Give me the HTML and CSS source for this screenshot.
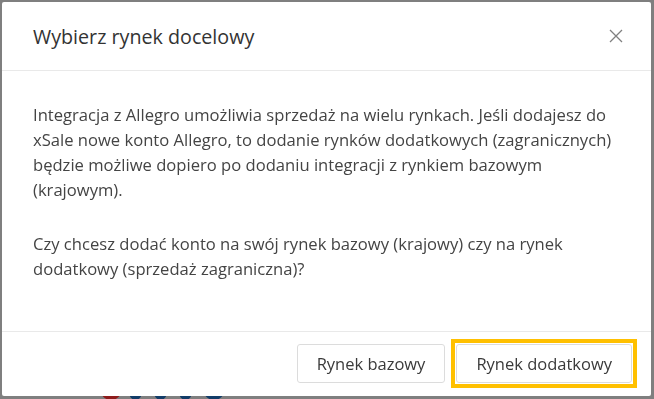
FILE: index.html
```html
<!DOCTYPE html>
<html lang="pl">

<head>
    <meta charset="UTF-8" />
    <meta name="viewport" content="width=device-width, initial-scale=1.0" />
    <title>Wybierz rynek docelowy</title>
    <link rel="stylesheet" href="styles.css">
</head>

<body>

    <div class="page">
        <div class="page__edge"></div>
        <div class="page__dots">
            <span class="dot dot--red"></span>
            <span class="dot dot--blue dot--small"></span>
            <span class="dot dot--blue dot--small"></span>
            <span class="dot dot--blue dot--small"></span>
            <span class="dot dot--blue"></span>
        </div>
    </div>

    <div class="modal">
        <div class="modal__header">
            <h4 class="modal__title">Wybierz rynek docelowy</h4>
            <button class="modal__close" aria-label="Zamknij">
                <svg width="14" height="14" viewBox="0 0 14 14">
                    <path d="M1 1 L13 13 M13 1 L1 13" stroke="#808080" stroke-width="1.3" fill="none" />
                </svg>
            </button>
        </div>
        <div class="modal__body">
            <p>Integracja z Allegro umożliwia sprzedaż na wielu rynkach. Jeśli dodajesz do xSale nowe konto Allegro, to dodanie rynków dodatkowych (zagranicznych) będzie możliwe dopiero po dodaniu integracji z rynkiem bazowym (krajowym).</p>
            <p>Czy chcesz dodać konto na swój rynek bazowy (krajowy) czy na rynek dodatkowy (sprzedaż zagraniczna)?</p>
        </div>
        <div class="modal__footer">
            <button class="btn">Rynek bazowy</button>
            <button class="btn btn--focus">Rynek dodatkowy</button>
        </div>
    </div>

</body>

</html>
```
FILE: styles.css
```css
body {
    margin: 0;
    background: #7f7f7f;
    font-family: "Open Sans", "Noto Sans", sans-serif;
    color: #333;
    overflow: hidden;
}

.page {
    height: 399px;
    display: flex;
    flex-direction: column;
    align-items: flex-end;
}

.page__edge {
    width: 2px;
    height: 18px;
    margin-top: 310px;
    background: #4a1414;
}

.page__dots {
    align-self: stretch;
    display: flex;
    gap: 6px;
    margin-top: 68px;
    padding-left: 100px;
}

.dot {
    width: 22px;
    height: 22px;
    border-radius: 50%;
}

.dot--small {
    width: 15px;
    margin-right: 4px;
}

.dot--red {
    background: #8e1b1b;
}

.dot--blue {
    background: #123c68;
}

/* okno dialogowe nad stroną */
.modal {
    position: fixed;
    top: 2px;
    left: 2px;
    width: 649px;
    height: 394px;
    background: #fff;
    border-radius: 2px;
    display: flex;
    flex-direction: column;
}

.modal__header {
    height: 68px;
    display: flex;
    align-items: center;
    justify-content: space-between;
    padding: 0 28px 0 31px;
    border-bottom: 1px solid #e9e9e9;
}

.modal__title {
    margin: 0;
    font-size: 19.7px;
    font-weight: 400;
    color: #333;
}

.modal__close {
    border: 0;
    background: none;
    padding: 0;
    display: flex;
    cursor: pointer;
}

.modal__body {
    flex: 1;
    padding: 31px 34px 0 31px;
    font-size: 16.6px;
    line-height: 25px;
    color: #444;
}

.modal__body p {
    margin: 0 0 29px;
}

.modal__footer {
    display: flex;
    justify-content: flex-end;
    gap: 11px;
    padding: 12px 19px 13px;
    border-top: 1px solid #e9e9e9;
}

.btn {
    position: relative;
    height: 39px;
    padding: 0 19px;
    background: #fff;
    border: 1px solid #dcdcdc;
    border-radius: 3px;
    font-family: inherit;
    font-size: 16.5px;
    color: #3a3a3a;
}

.btn--focus::after {
    content: "";
    position: absolute;
    inset: -6px;
    border: 4px solid #ffc000;
}
```
